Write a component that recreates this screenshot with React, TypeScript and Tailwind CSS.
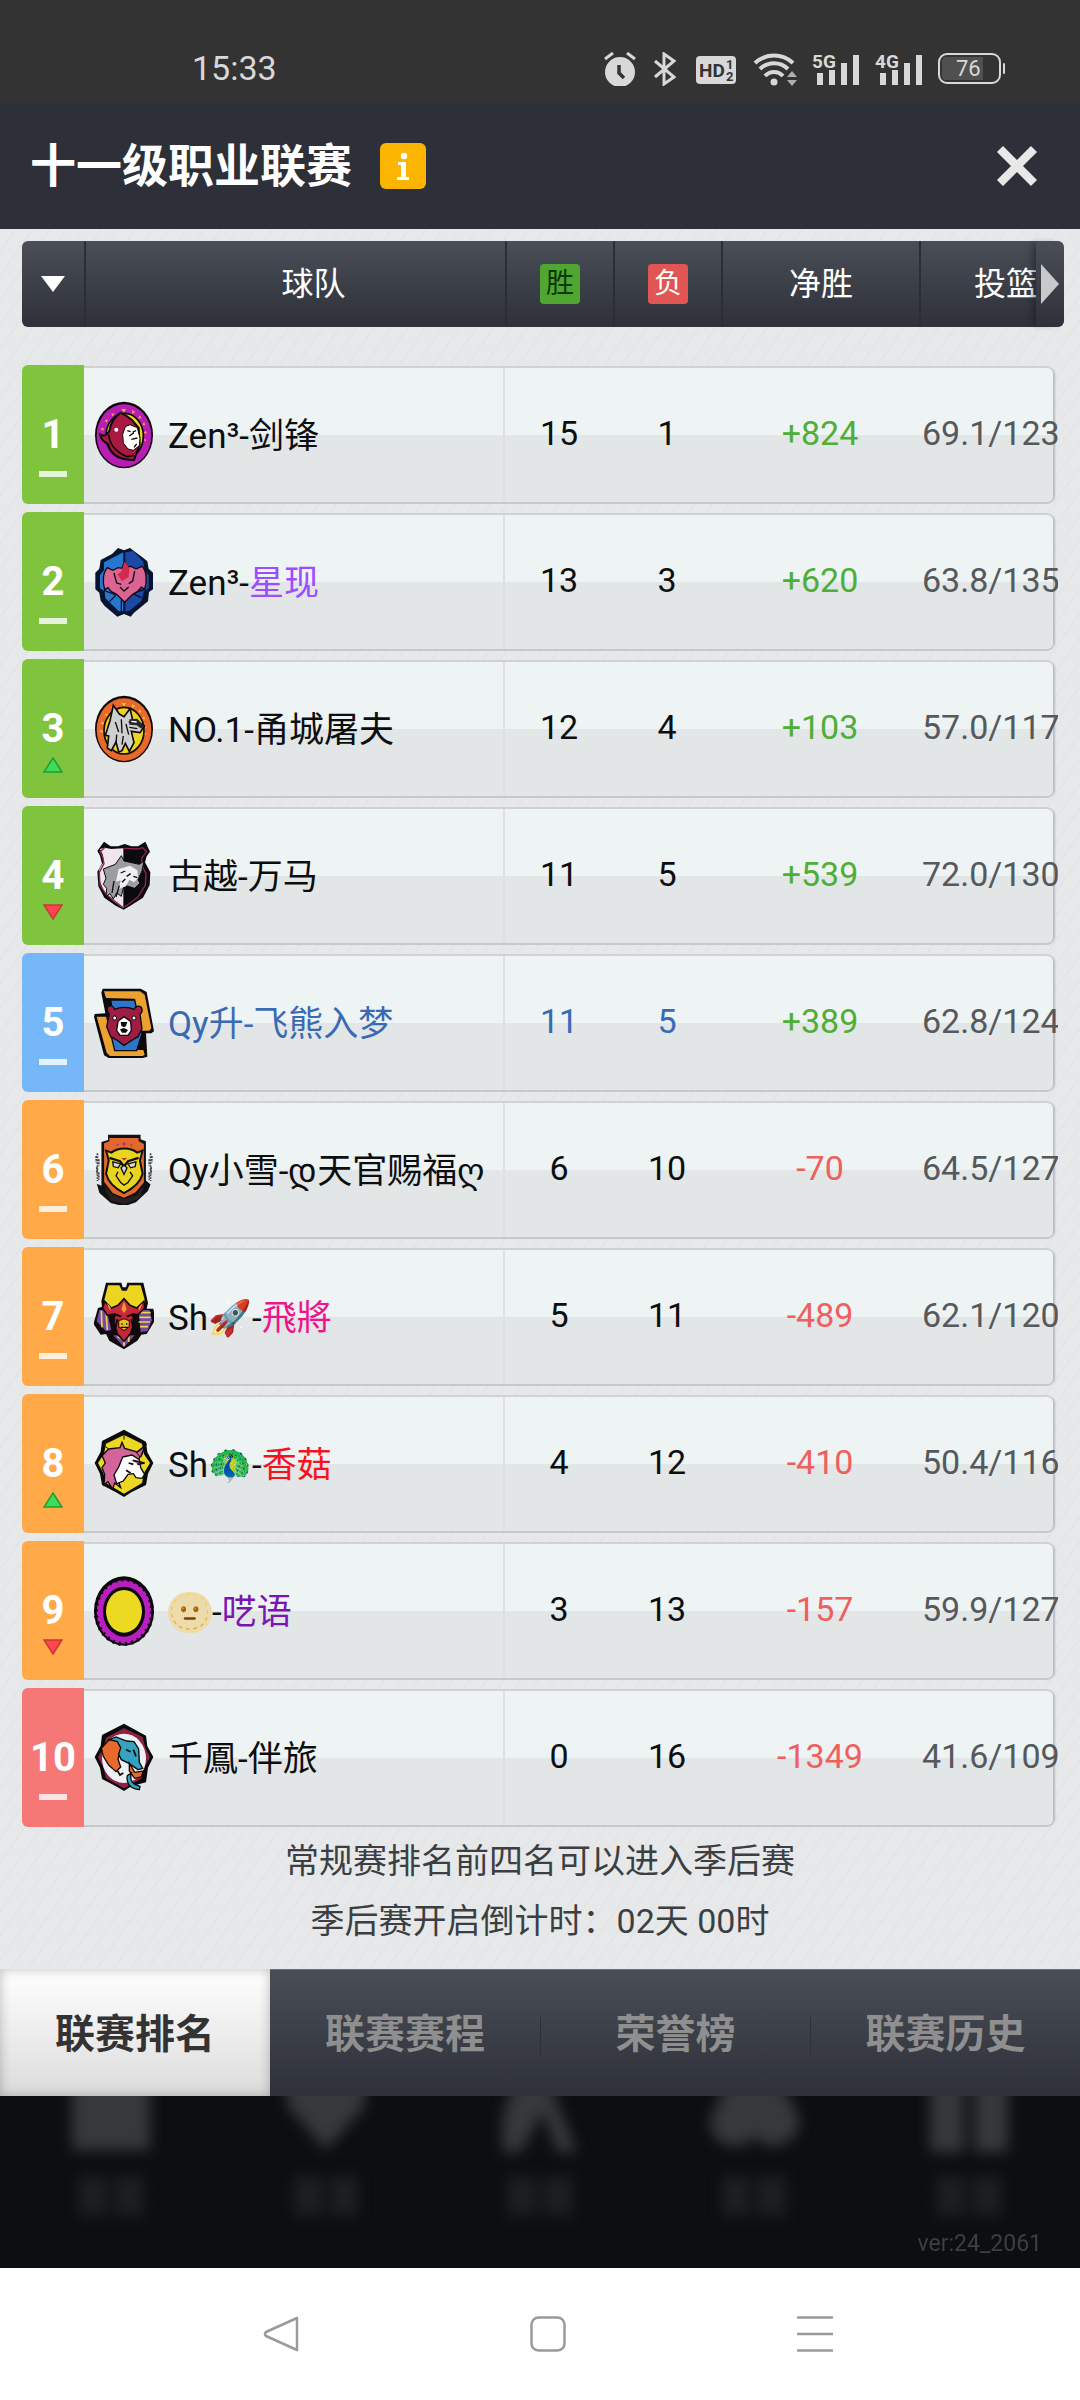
import { useState, type ReactNode } from "react";
import clsx from "clsx";

type Trend = "same" | "up" | "down";

interface Team {
  rank: number;
  trend: Trend;
  logo: ReactNode;
  prefix: ReactNode;
  name?: string;
  nameColor?: string;
  win: number;
  lose: number;
  diff: string;
  shots: string;
  mine?: boolean;
}

const Stars = ({ color }: { color: string }) => (
  <g fill={color}>
    <path d="M16 112l9-5 2 10zM19 86l10-3-1 10zM32 60l10-1-4 9zM52 40l10 2-7 7zM82 27l14 0-6 11zM114 30l10 6-9 6zM136 46l7 8-10 2zM150 66l4 10-9-1zM156 92l2 10-9-4zM154 116l2 8-8-3z" />
  </g>
);

const HoodLogo = () => (
  <svg viewBox="0 0 180 210" className="h-[70px] w-[60px] shrink-0">
    <ellipse cx="90" cy="105" rx="87" ry="100" fill="#0b0508" />
    <ellipse cx="90" cy="107" rx="82" ry="94" fill="#b81db4" />
    <Stars color="#f4a24c" />
    <ellipse cx="92" cy="108" rx="56" ry="68" fill="#eed52a" stroke="#0b0508" strokeWidth="5" />
    <path d="M18 103c14 7 20 3 28-10 4-30 20-45 34-55 16 8 25 14 34 22l20 24 3 50-17 46c-36 0-68-12-78-48-12-6-22-14-24-29z" fill="#a91a42" stroke="#10050a" strokeWidth="6" />
    <path d="M94 80l14-6 22 9 8 32-2 22-18 14-16-4-14-18-2-26z" fill="#fff" stroke="#10050a" strokeWidth="3" />
    <path d="M100 92l10 3M116 96l10-4M106 108l14-10M112 118l18-4M128 132l-8 10" stroke="#10050a" strokeWidth="4" fill="none" />
    <circle cx="67" cy="89" r="6" fill="#fff" />
    <path d="M44 104c4 34 24 54 56 66l20-4" stroke="#10050a" strokeWidth="5" fill="none" />
  </svg>
);

const PhoenixLogo = () => (
  <svg viewBox="0 0 180 210" className="h-[70px] w-[60px] shrink-0">
    <path d="M90 10l18-7 40 30 12 10 4 22 13 12v50l-12 8-3 28-42 34-10 12-20-8-20 8-38-32-12-16-4-24-12-10V77l12-12 4-26 34-18 18-18z" fill="#07142f" />
    <path d="M88 16l-32 16-26 14v24l-12 14v40l14 8 2 22 40 38h14z" fill="#2578cd" />
    <path d="M94 16l24-4 30 32 4 28 12 12v40l-14 8-8 30-34 28-14 4z" fill="#1b49a5" />
    <path d="M30 130l36 14-20 20M154 126l-38 14 26 12M82 160v36" stroke="#07142f" strokeWidth="4" fill="none" />
    <path d="M92 42l8 18 12-2 14 8 18-8c14 14 16 44 8 68l-10-6-12 14-14 8-24 24-24-24-16-8-10-12-10 6c-8-26-4-54 8-66l16 8 16-8 12 2z" fill="#dc6493" stroke="#160816" strokeWidth="4" />
    <path d="M92 42l14 22-2 26-20 12-14-20 12-8z" fill="#d22a4d" />
    <path d="M60 78l8 30 14 4M122 72l-6 30-12 8M78 120l12 12 14-12" stroke="#160816" strokeWidth="4" fill="none" />
  </svg>
);

const GryphonLogo = () => (
  <svg viewBox="0 0 180 210" className="h-[70px] w-[60px] shrink-0">
    <ellipse cx="90" cy="105" rx="87" ry="100" fill="#100a08" />
    <ellipse cx="90" cy="107" rx="82" ry="94" fill="#e7692b" />
    <Stars color="#f5c04a" />
    <ellipse cx="90" cy="110" rx="60" ry="70" fill="#ecd51f" stroke="#100a08" strokeWidth="5" />
    <path d="M58 34l18 26 14 8 18-24 8 34 36 18-14 20-26-4 8 34-14 26-12-24-10 22-10 4-8-30-14 26-12-8 4-36-10-2 14-44z" fill="#cfcfd1" stroke="#100a08" strokeWidth="5" />
    <path d="M64 84l10 30M82 76l2 42M96 90l8 32M104 84l28 4M68 122l-2 28M88 126l-4 26M106 100l24 4" stroke="#100a08" strokeWidth="4" fill="none" />
    <path d="M106 76l24-2 22 24-10 6-14-10-22-2z" fill="#25252b" />
    <path d="M112 82l16 2" stroke="#fff" strokeWidth="4" />
  </svg>
);

const WolfLogo = () => (
  <svg viewBox="0 0 180 210" className="h-[70px] w-[60px] shrink-0">
    <path d="M30 2l20 14h22l20-7 20 7h20l22-14 14 30-10 14-5 18 16 30-2 38-20 38-38 24-20 12-24-12-34-24-18-34-3-44 14-24-6-24-8-14z" fill="#0d0a0e" />
    <path d="M32 20l20 4 36-2v180l-30-22-28-30-14-32v-34l14-22-4-22-8-16z" fill="#efe6ec" />
    <path d="M90 22l42 2 14-4 12 12-14 18-2 20 14 28-2 34-22 36-40 30" stroke="#8c2652" strokeWidth="4" fill="none" />
    <path d="M32 20l-14 12 8 16 4 20-14 26 2 38 18 28 52 40" stroke="#8c2652" strokeWidth="4" fill="none" />
    <path d="M28 84l36-14 18-26 8 16 46 10 14-10-6 30-12 26 6 10-16 16-32-10-8 34-14-10-10 18-10-16-12 8 2-24-10-12 8-18z" fill="#9d9ca0" stroke="#0d0a0e" strokeWidth="3" />
    <path d="M74 84l34-10 22 14 2 24-12 12-14-8-10 20-22 8 6-26-14 4z" fill="#f1eef0" />
    <path d="M80 96l14-6M98 106l12-8M84 124l10-10M118 106l12 4M60 120l-6 36M76 134l-10 34" stroke="#0d0a0e" strokeWidth="4" fill="none" />
  </svg>
);

const BearLogo = () => (
  <svg viewBox="0 0 180 210" className="h-[70px] w-[60px] shrink-0">
    <path d="M26 2h114l18 10 22 118-8 6h-16l4 70-14 4H44l-14-8L0 86l2-8 32-2L22 14z" fill="#0d0a0e" />
    <path d="M30 10h108l14 10 20 100-6 8h-34L122 32l-86-2z" fill="#eca231" />
    <path d="M8 86h36l18 100h86l4 14-6 4H48l-10-10z" fill="#eca231" />
    <path d="M50 36h72l22 100-16 52H62L38 86h20z" fill="#2d74cb" stroke="#0d0a0e" strokeWidth="4" />
    <path d="M42 56c10-6 18 0 20 8 16-8 42-8 58 0 4-10 14-12 22-6 4 8 2 16-4 20l6 44-12 24-20 12-22 14-22-16-18-10-12-30 8-38c-6-6-8-14-4-22z" fill="#9f1d43" stroke="#0d0a0e" strokeWidth="4" />
    <path d="M90 86l20 14 2 28-10 14H78l-10-14 4-28z" fill="#fff" stroke="#0d0a0e" strokeWidth="4" />
    <path d="M80 102h20l-4 12-6 4-8-4zM78 124l12-4 12 6-6 8H84z" fill="#0d0a0e" />
    <circle cx="62" cy="90" r="6" fill="#fff" stroke="#0d0a0e" strokeWidth="3" />
    <circle cx="120" cy="90" r="6" fill="#fff" stroke="#0d0a0e" strokeWidth="3" />
  </svg>
);

const OwlLogo = () => (
  <svg viewBox="0 0 180 214" className="h-[71px] w-[60px] shrink-0">
    <path d="M10 58v84M6 66v20M14 76v20M8 100v20M14 116v22M170 58v84M174 66v20M166 76v20M172 100v20M166 116v22" stroke="#45454a" strokeWidth="5" strokeDasharray="6 3" />
    <path d="M42 2h98v14l16 6v118l14 12-8 20-36 34-36 12-40-10-34-30-8-28 14 6V24l20-6z" fill="#111012" />
    <path d="M46 12h88v10l16 8v116l-26 30-34 16-34-14-26-34V28l16-6z" fill="#e2682d" />
    <path d="M28 152l26 30 38 14 34-10 26-32-16 40-44 18-42-12z" fill="#29211f" />
    <path d="M68 28l8 4-8 4zM90 24l6 6-6 6-5-6zM112 28l4 6-8 2z" fill="#b9259a" />
    <path d="M36 50l16 6c22-16 56-16 78 0l16-6-8 30 8 40c-6 24-28 44-56 58-28-14-48-34-54-58l8-40z" fill="#e8d51f" stroke="#111012" strokeWidth="6" />
    <path d="M46 72l32 10 12 16 12-16 32-10" stroke="#111012" strokeWidth="7" fill="none" />
    <path d="M56 84l24 6-8 12-14-4zM126 84l-24 6 8 12 14-4z" fill="#d8dade" stroke="#111012" strokeWidth="4" />
    <path d="M72 114l-6 12 14 20 10 8 12-8 14-20-8-12" stroke="#111012" strokeWidth="4" fill="none" />
    <path d="M90 94l9 8-9 20-9-20z" fill="#d8dade" stroke="#111012" strokeWidth="4" />
    <path d="M82 72l8 8 10-8" fill="#b23a1a" />
  </svg>
);

const BullLogo = () => (
  <svg viewBox="0 0 180 210" className="h-[70px] w-[60px] shrink-0">
    <path d="M36 2h46l4 14h10l4-14h48l14 60-4 18h20l4 20-2 20-22 36-16 2-12 18-40 26-44-26-10-20-16 2-20-30L0 120l12-42 12-4-2-16z" fill="#100a0c" />
    <path d="M42 10h34l8 16h14l8-16h34l14 50-18 20H44L30 58z" fill="#ecd520" />
    <path d="M16 84h22l14 60-16 4L8 118zM134 84h32l8 30-14 34-20 2zM58 160l32 36 32-36z" fill="#754aa2" />
    <path d="M22 86l2 50M36 86l4 58M132 92h38M136 106h34M134 120h34M138 134h24M70 164l20 10v18M104 160v20" stroke="#ecd54a" strokeWidth="5" fill="none" />
    <path d="M32 58l20 20 20-8 18-20 18 20 20 8 22-20 2 20-20 20-16-2 4 28-10 30-20 24-20-22-10-34 2-26-22 4-14-22z" fill="#c6283b" stroke="#100a0c" strokeWidth="5" />
    <path d="M90 58l8 24-8 12-8-12zM38 62l12 14-2 10zM146 62l-12 14 2 10z" fill="#f29a2a" />
    <path d="M60 96l22 8M120 96l-22 8M70 112l-6 26M112 112l6 26" stroke="#100a0c" strokeWidth="6" fill="none" />
    <path d="M74 116l16-6 16 6v18l-16 12-16-12z" fill="#e6bd24" stroke="#5c0f16" strokeWidth="4" />
    <path d="M82 126h4M96 126h4M80 136h22" stroke="#100a0c" strokeWidth="4" />
  </svg>
);

const UnicornLogo = () => (
  <svg viewBox="0 0 180 210" className="h-[70px] w-[60px] shrink-0">
    <path d="M90 2l66 36 4 32 18 32-16 32-6 34-44 22-22 14-24-14-42-22-6-34-16-32 18-34 4-32z" fill="#0b0a0a" />
    <path d="M90 18l54 26 6 32 18 26-18 30-6 30-54 32-54-32-8-30-16-30 18-28 6-30z" fill="#ecd822" />
    <path d="M90 18v14M24 46l20 14M156 46l-12 12M30 132l14 4M148 134l-12 2" stroke="#0b0a0a" strokeWidth="3" />
    <path d="M24 80l20-20 34-4 6-16 8 18 34 10 12 14-8 22-48 10-14 26 12 36-18-14-6 18-14-22-12 10 2-32-8-20 10-14z" fill="#d3659a" stroke="#0b0a0a" strokeWidth="4" />
    <path d="M86 84l28-6 22 14 4 24 12 20-8 12-18-2-8-12-16 2-14 20-20 8-8-26 14-24z" fill="#fff" stroke="#0b0a0a" strokeWidth="4" />
    <path d="M128 70l26-20-14 34M116 94l36 8-22 4M104 102l14 4M96 124l14 8" stroke="#0b0a0a" strokeWidth="5" fill="#d3659a" />
  </svg>
);

const TireLogo = () => (
  <svg viewBox="0 0 180 210" className="h-[70px] w-[60px] shrink-0">
    <ellipse cx="90" cy="105" rx="90" ry="104" fill="#0b070c" />
    <ellipse cx="90" cy="108" rx="82" ry="95" fill="#b91fc0" />
    <ellipse cx="90" cy="107" rx="84" ry="97" fill="none" stroke="#0b070c" strokeWidth="12" strokeDasharray="6 13" />
    <ellipse cx="90" cy="107" rx="63" ry="75" fill="#0b070c" />
    <ellipse cx="90" cy="106" rx="54" ry="64" fill="#ecd922" />
  </svg>
);

const ElephantLogo = () => (
  <svg viewBox="0 0 180 210" className="h-[70px] w-[60px] shrink-0">
    <path d="M90 2l66 36 4 32 18 32-16 32-6 44-44 12-22 14-24-14-42-22-6-34-16-32 18-34 4-32z" fill="#0b0a0a" />
    <path d="M90 16l56 26 8 32 14 28-16 30-8 34-54 30-54-30-8-32-16-32 18-28 6-30z" fill="#8f2044" />
    <ellipse cx="90" cy="106" rx="66" ry="74" fill="#eef1f4" />
    <path d="M22 76l24-26 26 2 10 22-10 34 8 24-14 14-22-20-16-26z" fill="#e9692c" stroke="#0b0a0a" strokeWidth="4" />
    <path d="M46 50l20-8 32 12 22 2 14 22 2 40 10 18-14 4-26-18-24-12-8-16 6-20-10-18z" fill="#35a3bf" stroke="#0b0a0a" strokeWidth="4" />
    <path d="M106 120l16 28 26-4-6 18-20 4-16-22z" fill="#e9692c" stroke="#0b0a0a" strokeWidth="4" />
    <path d="M112 150c-6 24 4 34 26 40l-2 10c-28-2-40-20-36-42z" fill="#35a3bf" stroke="#0b0a0a" strokeWidth="4" />
    <path d="M96 80l14 6M118 80l8 20M70 142l8 14 10-6" stroke="#0b0a0a" strokeWidth="5" fill="none" />
  </svg>
);

const FaceName = () => (
  <>
    <span className="rounded-full bg-[#ecdcab]">🫥</span>-
  </>
);

const teams: Team[] = [
  { rank: 1, trend: "same", logo: <HoodLogo />, prefix: "Zen³-剑锋", win: 15, lose: 1, diff: "+824", shots: "69.1/123" },
  { rank: 2, trend: "same", logo: <PhoenixLogo />, prefix: "Zen³-", name: "星现", nameColor: "text-[#9b4dff]", win: 13, lose: 3, diff: "+620", shots: "63.8/135" },
  { rank: 3, trend: "up", logo: <GryphonLogo />, prefix: "NO.1-甬城屠夫", win: 12, lose: 4, diff: "+103", shots: "57.0/117" },
  { rank: 4, trend: "down", logo: <WolfLogo />, prefix: "古越-万马", win: 11, lose: 5, diff: "+539", shots: "72.0/130" },
  { rank: 5, trend: "same", logo: <BearLogo />, prefix: "Qy升-飞熊入梦", win: 11, lose: 5, diff: "+389", shots: "62.8/124", mine: true },
  { rank: 6, trend: "same", logo: <OwlLogo />, prefix: "Qy小雪-დ天官赐福ღ", win: 6, lose: 10, diff: "-70", shots: "64.5/127" },
  { rank: 7, trend: "same", logo: <BullLogo />, prefix: "Sh🚀-", name: "飛將", nameColor: "text-[#f0148c]", win: 5, lose: 11, diff: "-489", shots: "62.1/120" },
  { rank: 8, trend: "up", logo: <UnicornLogo />, prefix: "Sh🦚-", name: "香菇", nameColor: "text-[#f5141e]", win: 4, lose: 12, diff: "-410", shots: "50.4/116" },
  { rank: 9, trend: "down", logo: <TireLogo />, prefix: <FaceName />, name: "呓语", nameColor: "text-[#7a14b4]", win: 3, lose: 13, diff: "-157", shots: "59.9/127" },
  { rank: 10, trend: "same", logo: <ElephantLogo />, prefix: "千鳳-伴旅", win: 0, lose: 16, diff: "-1349", shots: "41.6/109" },
];

const tabs = ["联赛排名", "联赛赛程", "荣誉榜", "联赛历史"];

const rankColor = (rank: number) => {
  if (rank <= 4) return "bg-[#80c33c]";
  if (rank === 5) return "bg-[#76b7f8]";
  if (rank <= 9) return "bg-[#ffa948]";
  return "bg-[#f67876]";
};

const TrendMark = ({ trend }: { trend: Trend }) => {
  if (trend === "same") return <span className="mt-1 block h-[6px] w-7 bg-white/80" />;
  return (
    <svg viewBox="0 0 20 16" className="-mt-1 block h-4 w-5">
      {trend === "up" ? (
        <path d="M10 1l9 14H1z" fill="#3fdc5c" stroke="#229a35" strokeWidth="1.5" />
      ) : (
        <path d="M10 15l9-14H1z" fill="#ff4550" stroke="#c33b36" strokeWidth="1.5" />
      )}
    </svg>
  );
};

const Signal = ({ label }: { label: string }) => (
  <svg viewBox="0 0 48 36" className="h-9 w-12 overflow-visible fill-[#d8d8d8]">
    <text x="0" y="17" fontSize="19" fontWeight="700" fontFamily="Roboto">
      {label}
    </text>
    <path d="M5 22h6v12H5zM17 19h6v15h-6zM29 12h6v22h-6zM41 4h6v30h-6z" />
  </svg>
);

const StatusBar = () => (
  <div className="flex h-[103px] items-center justify-between bg-[#333] pt-[34px] pr-[75px] pl-[192px] text-[#d8d8d8]">
    <span className="text-[34px]">15:33</span>
    <div className="flex items-center">
      <svg viewBox="0 0 32 34" className="mr-[18px] h-[34px] w-8">
        <circle cx="16" cy="20" r="15" fill="#d8d8d8" />
        <path d="M1 7l8-6M31 7l-8-6" stroke="#d8d8d8" strokeWidth="3" />
        <path d="M15 13v8l5 5" stroke="#333" strokeWidth="3.5" fill="none" />
      </svg>
      <svg viewBox="0 0 22 34" className="mr-[20px] h-[34px] w-[22px]" fill="none" stroke="#d8d8d8" strokeWidth="3">
        <path d="M1 9l19 16-10 7V2l10 7L1 25" />
      </svg>
      <svg viewBox="0 0 40 28" className="mr-[17px] mt-[2px] h-7 w-10" fill="#333" fontFamily="Roboto" fontWeight="700">
        <rect width="40" height="28" rx="4" fill="#d8d8d8" />
        <text x="3" y="21" fontSize="19">HD</text>
        <text x="30" y="13" fontSize="13">1</text>
        <text x="30" y="25" fontSize="13">2</text>
      </svg>
      <svg viewBox="0 0 46 34" className="mr-[13px] h-[34px] w-[46px]">
        <g fill="none" stroke="#d8d8d8" strokeWidth="4">
          <path d="M2 11a28 28 0 0 1 38 0" />
          <path d="M7 17a20 20 0 0 1 28 0" />
          <path d="M12 24a12 12 0 0 1 18 0" />
        </g>
        <circle cx="21" cy="30" r="3.5" fill="#d8d8d8" />
        <path d="M34 25l5-6 5 6zM34 28h10l-5 6z" fill="#b0b0b0" />
      </svg>
      <div className="mr-[15px]"><Signal label="5G" /></div>
      <div className="mr-[15px]"><Signal label="4G" /></div>
      <div className="flex items-center">
        <span className="flex h-[31px] w-[63px] items-center justify-center rounded-[9px] border-2 border-[#d8d8d8] p-[2px]">
          <span className="flex h-full w-full items-center rounded-l-[4px] bg-gradient-to-r from-[#505050] from-75% to-[#333] to-75% pl-[14px] text-[22px] leading-none">76</span>
        </span>
        <span className="ml-[2px] h-[11px] w-[2px] rounded-sm bg-[#d8d8d8]" />
      </div>
    </div>
  </div>
);

const TitleBar = () => (
  <header className="flex h-[126px] items-center bg-[#2d3038] pr-[42px] pl-[30px] text-white">
    <h1 className="text-[46px] leading-none font-bold">十一级职业联赛</h1>
    <button type="button" aria-label="联赛说明" className="ml-7 flex h-[46px] w-[46px] items-center justify-center rounded-[6px] bg-[#fbb400]">
      <svg viewBox="0 0 12 28" className="h-7 w-3" fill="#fff">
        <circle cx="7" cy="4" r="3.2" />
        <path d="M1 10h8v15h3v3H0v-3h4V13H1z" />
      </svg>
    </button>
    <button type="button" aria-label="关闭" className="ml-auto">
      <svg viewBox="0 0 42 42" className="h-[42px] w-[42px]" stroke="#e8e8e8" strokeWidth="8.5">
        <path d="M4 4l34 34M38 4L4 38" />
      </svg>
    </button>
  </header>
);

const cardCell = "flex h-[134px] items-center bg-gradient-to-b from-[#eef3f4] from-50% to-[#e2e6e7] to-50%";
const cardShadow = "shadow-[0_-2px_0_#cfd1d3,0_2px_0_#c6c9ca]";

const TeamRow = ({ team }: { team: Team }) => (
  <tr className={clsx(team.mine ? "text-[#3a6ab4]" : "text-[#0c0e10]")}>
    <td className="p-0">
      <div className={clsx("flex h-[139px] flex-col items-center rounded-l-[6px] pt-[46px] text-white", rankColor(team.rank))}>
        <span className="text-[40px] leading-[48px] font-bold">{team.rank}</span>
        <span className="mt-2"><TrendMark trend={team.trend} /></span>
      </div>
    </td>
    <td className="p-0">
      <div className={clsx(cardCell, cardShadow, "border-r-2 border-[#dde1e2] pl-[10px]")}>
        {team.logo}
        <span className="ml-[14px] pt-1 text-[35px] whitespace-nowrap">
          {team.prefix}
          {team.name && <span className={team.nameColor}>{team.name}</span>}
        </span>
      </div>
    </td>
    <td className="p-0"><div className={clsx(cardCell, cardShadow, "justify-center pb-1")}>{team.win}</div></td>
    <td className="p-0"><div className={clsx(cardCell, cardShadow, "justify-center pb-1")}>{team.lose}</div></td>
    <td className="p-0">
      <div className={clsx(cardCell, cardShadow, "justify-center pb-1", team.diff.startsWith("+") ? "text-[#4fae35]" : "text-[#ee5f5d]")}>{team.diff}</div>
    </td>
    <td className="p-0">
      <div className={clsx(cardCell, "mr-[5px] rounded-r-[6px] pb-1 pl-[3px] text-[#55595c] shadow-[0_-2px_0_#cfd1d3,0_2px_0_#c6c9ca,2px_0_2px_#b9bcbe]")}>{team.shots}</div>
    </td>
  </tr>
);

const headCell = "h-[86px] border-l-2 border-[#2b2e35] p-0 font-normal";

const Standings = () => (
  <section className="relative mx-[22px] pt-1">
    <div className="overflow-hidden">
      <table className="w-full table-fixed border-separate border-spacing-x-0 border-spacing-y-2 text-[34px] leading-[40px]">
        <colgroup>
          <col className="w-[62px]" />
          <col />
          <col className="w-[108px]" />
          <col className="w-[108px]" />
          <col className="w-[198px]" />
          <col className="w-[139px]" />
        </colgroup>
        <thead>
          <tr className="bg-gradient-to-b from-[#4a4e56] to-[#2e3139] text-[32px] text-white">
            <th className="h-[86px] rounded-l-[6px] p-0">
              <button type="button" aria-label="排序" className="flex w-full justify-center">
                <svg viewBox="0 0 24 16" className="h-4 w-6" fill="#fff"><path d="M0 0h24L12 16z" /></svg>
              </button>
            </th>
            <th className={clsx(headCell, "pl-[36px]")}>球队</th>
            <th className={headCell}>
              <span className="mx-auto flex h-10 w-10 items-center justify-center rounded-[4px] bg-[#4fa732] text-[28px] leading-none text-[#0d3906]">胜</span>
            </th>
            <th className={headCell}>
              <span className="mx-auto flex h-10 w-10 items-center justify-center rounded-[4px] bg-[#e15553] text-[28px] leading-none text-white">负</span>
            </th>
            <th className={headCell}>净胜</th>
            <th className={clsx(headCell, "pr-[20px] text-right")}>投篮</th>
          </tr>
        </thead>
        <tbody>
          <tr aria-hidden="true"><td colSpan={6} className="h-[22px] p-0" /></tr>
          {teams.map((team) => (
            <TeamRow key={team.rank} team={team} />
          ))}
        </tbody>
      </table>
    </div>
    <button type="button" aria-label="更多数据" className="absolute top-3 -right-[6px] flex h-[86px] w-7 items-center justify-center rounded-r-[6px] bg-gradient-to-b from-[#4a4e56] to-[#2e3139] shadow-[-6px_0_6px_-3px_rgba(20,22,26,0.5)]">
      <svg viewBox="0 0 18 40" className="h-10 w-[18px]" fill="#c8c9cc"><path d="M0 0l18 20L0 40z" /></svg>
    </button>
  </section>
);

const dockShapes = [
  <path d="M4 -30h78v84H4z" />,
  <path d="M4 -30h78v40L43 54 4 10z" />,
  <path d="M6 56C2 20 10-10 30-20h20l30 76H60L46 16 24 56z" />,
  <path d="M20-20h46l22 40c2 20-14 32-30 30L43 42l-13 8C10 52-4 40 0 20z" />,
  <path d="M4-30h34v86H4zM48-30h34v86H48z" />,
];

const Dock = () => (
  <div className="relative overflow-hidden bg-[#0d0e10]">
    <div className="flex h-[172px] px-1 blur-[7px]">
      {dockShapes.map((shape, i) => (
        <div key={i} className="flex flex-1 flex-col items-center">
          <svg viewBox="0 0 86 60" className="h-[60px] w-[86px] overflow-visible" fill="#36383c">{shape}</svg>
          <div className="mt-5 flex gap-2">
            <span className="h-10 w-7 bg-[#1d1f22]" />
            <span className="h-10 w-7 bg-[#1d1f22]" />
          </div>
        </div>
      ))}
    </div>
    <span className="absolute right-[38px] bottom-3 text-[23px] leading-6 text-[#3c3e41]">ver:24_2061</span>
  </div>
);

const SystemNav = () => (
  <nav className="flex h-[132px] items-center justify-center gap-[231px] bg-white pl-4" aria-label="系统导航">
    <button type="button" aria-label="返回">
      <svg viewBox="0 0 36 36" className="h-9 w-9" fill="none" stroke="#9a9a9a" strokeWidth="2.5" strokeLinejoin="round">
        <path d="M34 2v32L3 20q-2-2 0-4z" />
      </svg>
    </button>
    <button type="button" aria-label="主页">
      <svg viewBox="0 0 36 36" className="h-9 w-9" fill="none" stroke="#9a9a9a" strokeWidth="2.5">
        <rect x="1.5" y="1.5" width="33" height="33" rx="7" />
      </svg>
    </button>
    <button type="button" aria-label="最近任务">
      <svg viewBox="0 0 36 36" className="h-9 w-9" stroke="#9a9a9a" strokeWidth="2.5">
        <path d="M0 1.5h36M0 18h36M0 34.5h36" />
      </svg>
    </button>
  </nav>
);

export default function App() {
  const [active, setActive] = useState(0);

  return (
    <div className="flex min-h-screen flex-col [font-family:Roboto,'Noto_Sans_CJK_SC',sans-serif]">
      <StatusBar />
      <TitleBar />
      <main className="flex-1 bg-[#e6e8ea] bg-[repeating-linear-gradient(125deg,transparent_0_12px,rgba(0,0,0,0.015)_12px_14px)]">
        <Standings />
        <div className="-mt-1 text-center text-[34px] leading-[60px] text-[#3c3f42]">
          <p>常规赛排名前四名可以进入季后赛</p>
          <p>季后赛开启倒计时：02天 00时</p>
        </div>
      </main>
      <div className="grid h-[127px] grid-cols-4 bg-gradient-to-b from-[#4a4e56] to-[#2e3139]" role="tablist">
        {tabs.map((tab, i) => (
          <button
            key={tab}
            type="button"
            role="tab"
            aria-selected={active === i}
            onClick={() => setActive(i)}
            className={clsx(
              "flex items-center justify-center pt-1 text-[40px] font-bold",
              active === i
                ? "bg-gradient-to-b from-white to-[#dcdcdc] text-[#333] shadow-[inset_0_0_12px_rgba(0,0,0,0.25)]"
                : "border-t border-[#6c717a] text-[#8f8f8f]"
            )}
          >
            <span className={clsx("w-full leading-10", i > 1 && "border-l border-[#2e3139]")}>{tab}</span>
          </button>
        ))}
      </div>
      <Dock />
      <SystemNav />
    </div>
  );
}
